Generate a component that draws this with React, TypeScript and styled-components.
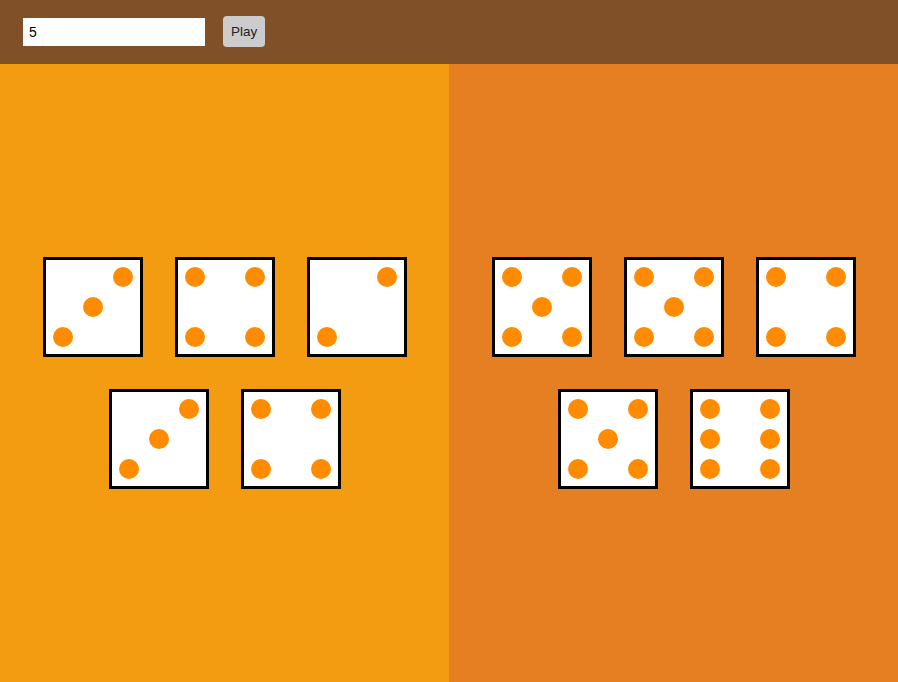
import React from "react";
import styled, { createGlobalStyle } from "styled-components";

const Global = createGlobalStyle`
  html, body { margin: 0; padding: 0; }
  body { font-family: "Liberation Sans", Arial, sans-serif; }
  * { box-sizing: border-box; }
`;

const Page = styled.div`
  display: flex;
  flex-direction: column;
  height: 100vh;
`;

const Header = styled.header`
  height: 64px;
  background: #805129;
  display: flex;
  align-items: center;
  padding-left: 23px;
  gap: 18px;
  flex-shrink: 0;
`;

const NumberInput = styled.input`
  width: 182px;
  height: 28px;
  border: none;
  outline: none;
  padding: 0 6px;
  font-family: "Liberation Sans", Arial, sans-serif;
  font-size: 14px;
  color: #000;
  background: #fff;
`;

const PlayButton = styled.button`
  height: 31px;
  margin-top: -1px;
  padding: 0 8px;
  border: none;
  border-radius: 4px;
  background: #cccccc;
  color: #222;
  font-family: "Liberation Sans", Arial, sans-serif;
  font-size: 13.5px;
`;

const Board = styled.main`
  flex: 1;
  display: flex;
`;

const Side = styled.section<{ $bg: string }>`
  flex: 1;
  background: ${(p) => p.$bg};
  display: flex;
  align-items: center;
  justify-content: center;
`;

const DiceWrap = styled.div`
  display: flex;
  flex-wrap: wrap;
  justify-content: center;
  width: 100%;
`;

const Die = styled.div`
  width: 100px;
  height: 100px;
  margin: 16px;
  border: 3px solid #000;
  background: #fff;
  padding: 2px;
  display: grid;
  grid-template-columns: repeat(3, 30px);
  grid-template-rows: repeat(3, 30px);
`;

const Cell = styled.div`
  display: flex;
  align-items: center;
  justify-content: center;
`;

const Pip = styled.span`
  width: 20px;
  height: 20px;
  border-radius: 50%;
  background: #ff8c00;
`;

const FACES: Record<number, number[]> = {
  1: [4],
  2: [2, 6],
  3: [2, 4, 6],
  4: [0, 2, 6, 8],
  5: [0, 2, 4, 6, 8],
  6: [0, 2, 3, 5, 6, 8],
};

const DieFace = ({ value }: { value: number }) => (
  <Die>
    {Array.from({ length: 9 }).map((_, i) => (
      <Cell key={i}>{FACES[value].includes(i) && <Pip />}</Cell>
    ))}
  </Die>
);

export default function App() {
  const left = [3, 4, 2, 3, 4];
  const right = [5, 5, 4, 5, 6];
  return (
    <>
      <Global />
      <Page>
        <Header>
          <NumberInput type="text" defaultValue="5" />
          <PlayButton>Play</PlayButton>
        </Header>
        <Board>
          <Side $bg="#f39c12">
            <DiceWrap>
              {left.map((v, i) => (
                <DieFace key={i} value={v} />
              ))}
            </DiceWrap>
          </Side>
          <Side $bg="#e67e22">
            <DiceWrap>
              {right.map((v, i) => (
                <DieFace key={i} value={v} />
              ))}
            </DiceWrap>
          </Side>
        </Board>
      </Page>
    </>
  );
}
